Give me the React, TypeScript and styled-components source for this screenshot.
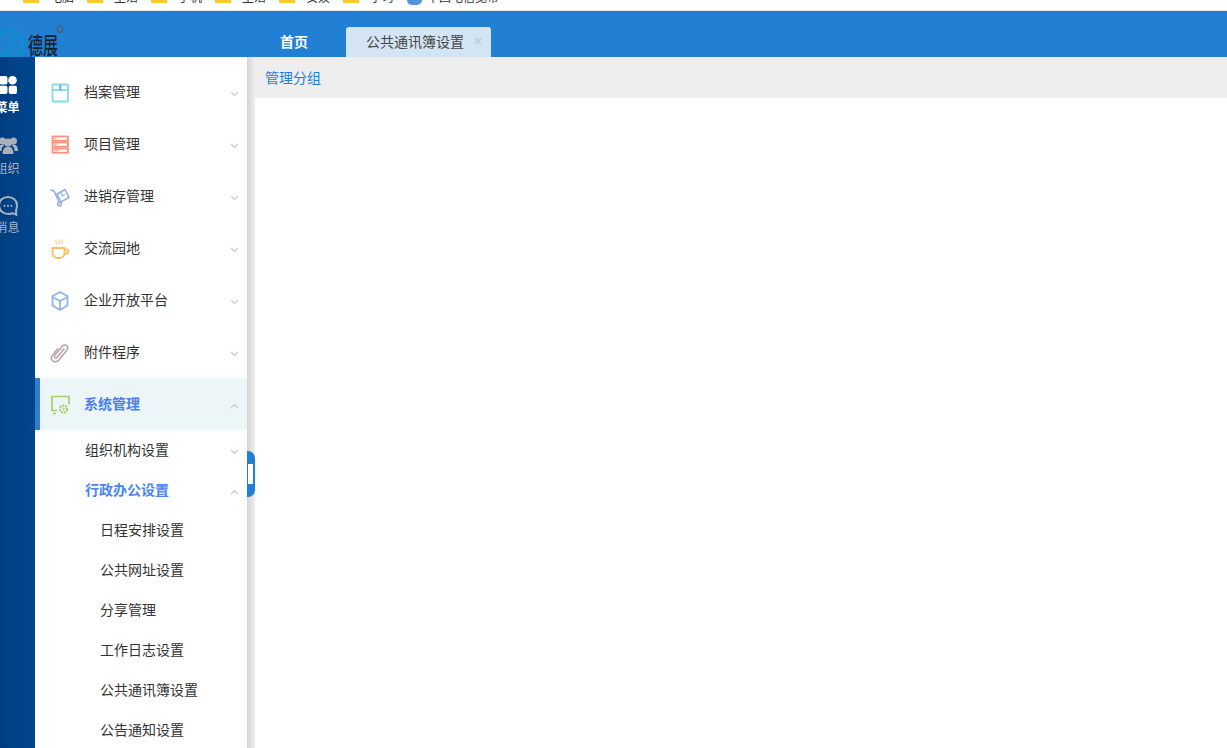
import React from "react";
import styled, { createGlobalStyle } from "styled-components";

const Global = createGlobalStyle`
  html, body { margin: 0; padding: 0; height: 100%; overflow: hidden; background: #fff; }
  #root { height: 748px; }
  * { box-sizing: border-box; }
  body { font-family: "Noto Sans CJK SC", "Liberation Sans", sans-serif; font-size: 14px; }
`;

const Page = styled.div`
  width: 1227px; height: 748px; display: flex; flex-direction: column; overflow: hidden;
`;
const Bookmarks = styled.div`
  height: 11px; flex: none; display: flex; overflow: hidden;
  padding-left: 23px; background: #fff; border-bottom: 1px solid #e6e6e6;
`;
const Bookmark = styled.div<{ $w?: number; $gap?: number }>`
  width: ${p => (p.$w ? `${p.$w}px` : "auto")}; flex: none; display: flex; gap: ${p => p.$gap ?? 11}px; height: 10px; align-items: flex-start;
`;
const Folder = styled.span`
  width: 16px; height: 3px; background: #fcc63f; flex: none;
`;
const BookmarkText = styled.span`
  font-size: 12px; line-height: 12px; color: #333; white-space: nowrap; margin-top: -9px;
`;
const Globe = styled.span`
  width: 15px; height: 5px; flex: none; border-radius: 0 0 8px 8px; background: #4f94e0;
`;
const Header = styled.header`
  height: 46px; flex: none; background: #2280d4; display: flex; align-items: flex-end; overflow: hidden;
`;
const Logo = styled.div`
  width: 247px; flex: none; height: 46px; display: flex; align-items: flex-end; overflow: hidden; position: relative;
`;
const LogoText = styled.span`
  font-size: 15px; line-height: 22px; height: 22px; color: #18222e; font-weight: 500; margin: 0 0 -4px 1px;
  transform: scaleY(1.5); transform-origin: bottom;
`;
const LogoMark = styled.span`
  position: absolute; left: 57px; top: 14px; width: 6px; height: 8px; border: 1px solid #2f5f85; background: #3f79a8; border-radius: 50%;
`;
const Tabs = styled.div`
  display: flex; align-items: flex-end; height: 30px;
`;
const HomeTab = styled.div`
  width: 99px; height: 30px; display: flex; align-items: center; justify-content: center; color: #fff; font-weight: 700; font-size: 14px;
  padding: 0 5px 2px 0;
`;
const ActiveTab = styled.div`
  width: 145px; height: 30px; background: #d3e5f5; border-radius: 3px 3px 0 0; display: flex; align-items: center;
  padding: 0 0 2px 20px; gap: 10px; color: #444; font-size: 14px;
`;
const Body = styled.div`
  flex: 1; display: flex; min-height: 0;
`;
const Rail = styled.nav`
  width: 35px; flex: none; background: linear-gradient(90deg, #003d80, #00478f); overflow: hidden; display: flex; flex-direction: column; padding-top: 19px;
`;
const RailItem = styled.div<{ $on?: boolean }>`
  width: 35px; height: 60px; flex: none; display: flex; flex-direction: column; align-items: center; margin-left: -10px;
  color: ${p => (p.$on ? "#fff" : "#a9b4c4")}; font-weight: ${p => (p.$on ? 700 : 400)}; font-size: 12px; line-height: 16px;
`;
const RailLabel = styled.span<{ $top: number }>`
  white-space: nowrap; margin-top: ${p => p.$top}px;
`;
const Side = styled.aside`
  width: 212px; flex: none; background: #fff; padding-top: 9px; overflow: hidden;
`;
const Row = styled.div<{ $on?: boolean }>`
  height: 52px; display: flex; align-items: center; padding: 0 8px 0 ${p => (p.$on ? 10 : 15)}px;
  background: ${p => (p.$on ? "#ecf5f8" : "#fff")};
  border-left: ${p => (p.$on ? "5px solid #2e7fd0" : "none")};
  color: ${p => (p.$on ? "#4a7ff0" : "#333")}; font-weight: ${p => (p.$on ? 700 : 400)};
`;
const RowIcon = styled.span`
  width: 20px; height: 20px; flex: none; margin: 2px 14px 0 0; display: flex;
`;
const Label = styled.span`
  flex: 1; white-space: nowrap; margin-bottom: 2px;
`;
const Chevron = styled.svg`
  width: 9px; height: 6px; flex: none; margin-top: 3px;
`;
const SubRow = styled.div<{ $on?: boolean }>`
  height: 40px; display: flex; align-items: center; padding: 0 8px 0 50px;
  color: ${p => (p.$on ? "#4a86f0" : "#333")}; font-weight: ${p => (p.$on ? 700 : 400)};
`;
const LeafRow = styled.div`
  height: 40px; display: flex; align-items: center; padding: 0 0 2px 65px; color: #333; white-space: nowrap;
`;
const Divider = styled.div`
  width: 8px; flex: none; background: linear-gradient(90deg, #d4d4d4, #eeeeee); position: relative;
`;
const Handle = styled.div`
  position: absolute; left: 0; top: 394px; width: 8px; height: 46px; background: #2280d4; border-radius: 0 7px 7px 0;
  display: flex; align-items: center; justify-content: flex-start; padding-left: 1px;
`;
const HandleBar = styled.span`
  width: 5px; height: 20px; background: #fff; display: block;
`;
const Main = styled.main`
  flex: 1; background: #fff;
`;
const Crumb = styled.div`
  height: 41px; background: #eeeeee; display: flex; align-items: center; padding: 0 0 2px 10px; color: #2280d4; font-size: 14px;
`;

const Down = () => (
  <Chevron viewBox="0 0 9 6"><path d="M1 1l3.500 3.500L8 1" fill="none" stroke="#d2c6ca" strokeWidth="1.200" /></Chevron>
);
const Up = () => (
  <Chevron viewBox="0 0 9 6"><path d="M1 5l3.500-3.500L8 5" fill="none" stroke="#c4c8cc" strokeWidth="1.200" /></Chevron>
);

const s = { fill: "none", strokeWidth: 1.8 };
const IconBox = () => (
  <svg viewBox="0 0 20 20" width="20" height="20"><g {...s} stroke="#7fdcea"><rect x="2.500" y="1.500" width="15.500" height="17" rx="1" /><path d="M2.500 7h15.500" /></g><path d="M10.200 2v6" stroke="#6fc4dc" strokeWidth="2.400" /></svg>
);
const IconServer = () => (
  <svg viewBox="0 0 20 20" width="20" height="20"><g {...s} stroke="#fb9080"><rect x="2.500" y="1.500" width="15.500" height="4.200" /><rect x="2.500" y="7.500" width="15.500" height="4.200" /><rect x="2.500" y="13.500" width="15.500" height="4.200" /></g><path d="M4.500 3.600h2M4.500 9.600h2M4.500 15.600h4" stroke="#fb9080" strokeWidth="1" /></svg>
);
const IconCart = () => (
  <svg viewBox="0 0 20 20" width="20" height="20"><g fill="none" stroke="#93abe6" strokeWidth="1.500"><path d="M.5 3l3.500 1 5 11" /><path d="M7 7l8-4.500 4 8-8 4.500z" /><path d="M10.500 5l2 4 2.500-1.500" strokeWidth="1.200" /><circle cx="9.500" cy="17" r="1.800" /></g></svg>
);
const IconCup = () => (
  <svg viewBox="0 0 20 20" width="20" height="20"><g {...s} stroke="#ffbf55"><path d="M2.500 9h12v5a5 5 0 0 1-5 5h-2a5 5 0 0 1-5-5z" /><path d="M14.500 10.300h1.800a2 2 0 0 1 0 4.300h-2" /><path d="M6 .5c-1 1.500 1 2.200 0 4.800M9 .5c-1 1.500 1 2.200 0 4.800M12 .5c-1 1.500 1 2.200 0 4.800" strokeWidth="1" /></g></svg>
);
const IconCube = () => (
  <svg viewBox="0 0 20 20" width="20" height="20"><g {...s} stroke="#8fb4ee"><path d="M10 1l7.500 4v9.500L10 19l-7.500-4.500V5z" /><path d="M2.500 6L10 10l7.500-4M10 10v9" /></g></svg>
);
const IconClip = () => (
  <svg viewBox="0 0 20 20" width="20" height="20"><path d="M14.500 5.500L7 14.500c-1 1.300-2.700.6-2.700-.7 0-.6.200-1 .6-1.500l7.600-9.200c1.500-1.700 4-1.500 5 .2.700 1.300.4 2.600-.5 3.700L9 17c-2 2.200-5 2.300-6.600.7-1.500-1.500-1.300-3.900 0-5.500L8 5.500" fill="none" stroke="#b5a3a3" strokeWidth="1.500" /></svg>
);
const IconSystem = () => (
  <svg viewBox="0 0 20 20" width="20" height="20"><g fill="none" stroke="#a7d36c" strokeWidth="1.700"><path d="M7 15.500H2V1.500h17v8" /><path d="M3 18.500h3" /><circle cx="13.500" cy="14" r="3.600" strokeWidth="2" strokeDasharray="2.200 .8" /><circle cx="13.500" cy="14" r=".8" strokeWidth="1" /></g></svg>
);

const IconMenu = () => (
  <svg viewBox="0 0 18 18" width="18" height="18"><g fill="#fff"><rect x="0" y="0" width="8.500" height="8.500" rx="2" /><circle cx="13.500" cy="4.300" r="4.300" /><rect x="0" y="9.700" width="8.500" height="8.300" rx="2" /><rect x="9.700" y="9.700" width="8.300" height="8.300" rx="2" /></g></svg>
);
const IconGroup = () => (
  <svg viewBox="0 0 20 19" width="20" height="19"><g fill="#a9b0ba"><circle cx="4.500" cy="5" r="3.500" /><circle cx="15.500" cy="5" r="3.500" /><circle cx="10" cy="6.500" r="4" /><path d="M0 15c0-4 1.500-6.500 4.500-6.500 1 0 1.500.3 2 .7-2 1.300-3 3-3 5.800zM20 15c0-4-1.500-6.500-4.500-6.500-1 0-1.500.3-2 .7 2 1.300 3 3 3 5.800z" /><path d="M4.500 18c0-4.500 2-7.500 5.500-7.500s5.500 3 5.500 7.500z" /></g></svg>
);
const IconChat = () => (
  <svg viewBox="0 0 20 20" width="20" height="20"><path d="M10 1c4.900 0 9 3.500 9 8.300 0 2.500-1 4.300-1 6.700l.3 2.800-3.600-1.600c-1.300.4-3 .8-4.700.8-4.900 0-9-3.700-9-8.700s4.100-8.300 9-8.300z" fill="none" stroke="#a9b0ba" strokeWidth="2" /><g fill="#a9b0ba"><circle cx="6.500" cy="9.800" r="1.100" /><circle cx="10" cy="9.800" r="1.100" /><circle cx="13.500" cy="9.800" r="1.100" /></g></svg>
);

const menu: [string, React.ReactNode][] = [
  ["档案管理", <IconBox />],
  ["项目管理", <IconServer />],
  ["进销存管理", <IconCart />],
  ["交流园地", <IconCup />],
  ["企业开放平台", <IconCube />],
  ["附件程序", <IconClip />],
];
const leaves = ["日程安排设置", "公共网址设置", "分享管理", "工作日志设置", "公共通讯簿设置", "公告通知设置"];
const marks = ["电脑", "生活", "手机", "生活", "安娱", "学习"];

export default function App() {
  return (
    <Page>
      <Global />
      <Bookmarks>
        {marks.map((t, i) => (
          <Bookmark key={i} $w={64}><Folder /><BookmarkText>{t}</BookmarkText></Bookmark>
        ))}
        <Bookmark $gap={5}><Globe /><BookmarkText>中国电信宽带</BookmarkText></Bookmark>
      </Bookmarks>
      <Header>
        <Logo>
          <svg viewBox="0 0 27 29" width="27" height="29">
            <circle cx="9.500" cy="16" r="13.500" fill="none" stroke="#108dcf" strokeWidth="3.500" />
            <path d="M17 1L7 29" fill="none" stroke="#108dcf" strokeWidth="4" />
          </svg>
          <LogoText>德展</LogoText>
          <LogoMark />
        </Logo>
        <Tabs>
          <HomeTab>首页</HomeTab>
          <ActiveTab>公共通讯簿设置
            <svg viewBox="0 0 8 8" width="8" height="8"><path d="M1 1l6 6M7 1L1 7" stroke="#c2cfdb" strokeWidth="1.800" /></svg>
          </ActiveTab>
        </Tabs>
      </Header>
      <Body>
        <Rail>
          <RailItem $on><IconMenu /><RailLabel $top={5}>菜单</RailLabel></RailItem>
          <RailItem><IconGroup /><RailLabel $top={5}>组织</RailLabel></RailItem>
          <RailItem><IconChat /><RailLabel $top={3}>消息</RailLabel></RailItem>
        </Rail>
        <Side>
          {menu.map(([t, ic]) => (
            <Row key={t}><RowIcon>{ic}</RowIcon><Label>{t}</Label><Down /></Row>
          ))}
          <Row $on><RowIcon><IconSystem /></RowIcon><Label>系统管理</Label><Up /></Row>
          <SubRow><Label>组织机构设置</Label><Down /></SubRow>
          <SubRow $on><Label>行政办公设置</Label><Up /></SubRow>
          {leaves.map(t => <LeafRow key={t}>{t}</LeafRow>)}
        </Side>
        <Divider><Handle><HandleBar /></Handle></Divider>
        <Main><Crumb>管理分组</Crumb></Main>
      </Body>
    </Page>
  );
}
